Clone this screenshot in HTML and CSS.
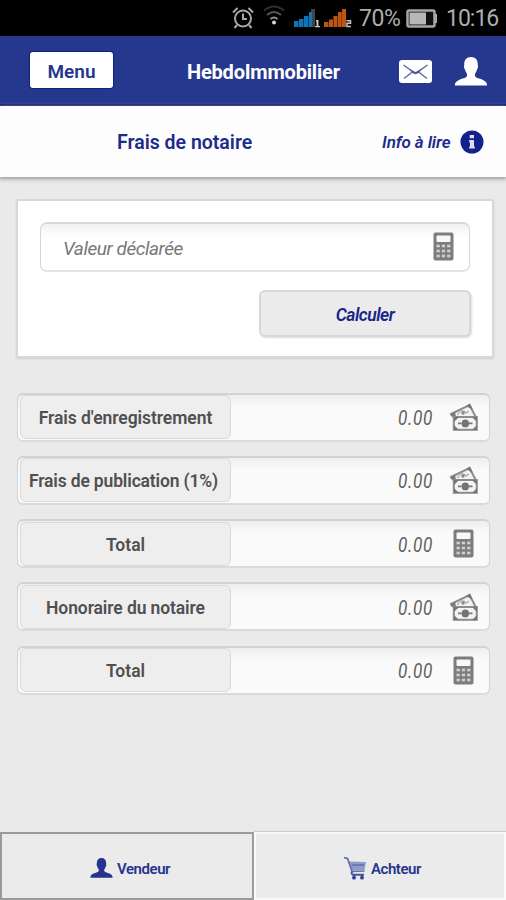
FILE: index.html
```html
<!DOCTYPE html>
<html lang="fr">
<head>
<meta charset="utf-8">
<title>HebdoImmobilier</title>
<link rel="stylesheet" href="styles.css">
</head>
<body>
<svg width="0" height="0" class="defs">
  <symbol id="person" viewBox="0 0 34 30"><path d="M17 0c4.600 0 7 3 7 7.500c0 1.500.3 1.800.2 3.200c-.2 1.600-1 1.800-1.300 3.300c-.4 2-1.900 3-1.900 4.500c0 2 1.500 2.700 4.500 3.700c5 1.700 8.200 3.200 8.200 7.300H.3c0-4.100 3.200-5.600 8.200-7.300c3-1 4.500-1.700 4.500-3.700c0-1.500-1.500-2.500-1.900-4.500c-.3-1.500-1.100-1.700-1.300-3.300c-.1-1.400.2-1.700.2-3.200C10 3 12.400 0 17 0z" fill="currentColor"/></symbol>
  <symbol id="calc" viewBox="0 0 21 29">
    <rect x=".5" y=".5" width="20" height="28" rx="2" fill="#7d7d7d"/>
    <rect x="3.500" y="3.500" width="14" height="6.500" rx="1" fill="#f8f8f8"/>
    <g fill="#d0d0d0"><rect x="3.500" y="12.700" width="3.300" height="2.600"/><rect x="8.800" y="12.700" width="3.300" height="2.600"/><rect x="14.100" y="12.700" width="3.300" height="2.600"/><rect x="3.500" y="17.700" width="3.300" height="2.600"/><rect x="8.800" y="17.700" width="3.300" height="2.600"/><rect x="14.100" y="17.700" width="3.300" height="2.600"/><rect x="3.500" y="22.700" width="3.300" height="2.600"/><rect x="8.800" y="22.700" width="3.300" height="2.600"/><rect x="14.100" y="22.700" width="3.300" height="2.600"/></g>
  </symbol>
  <symbol id="cash" viewBox="0 0 29 28">
    <path d="M4 14L2 11L20.500 2L26.500 13.500" fill="#f2f2f2" stroke="#8c8c8c" stroke-width="2"/>
    <path d="M1 12l5-3 1 5zM17 3l4-2.500 3 6.500z" fill="#777"/>
    <path d="M8.500 12q1-3 4-4q3-.5 4.500 2l3-2" fill="none" stroke="#aaa" stroke-width="1.300"/>
    <circle cx="14" cy="10" r="1.700" fill="#888"/>
    <rect x="4.800" y="14" width="23" height="12.800" fill="#f4f4f4" stroke="#8c8c8c" stroke-width="2"/>
    <path d="M5 14h5l-5 5zM28 14h-5l5 5zM5 27h5l-5-5zM28 27h-5l5-5z" fill="#777"/>
    <ellipse cx="16.300" cy="20.400" rx="3.700" ry="3.900" fill="#737373"/><path d="M9 20.400h3.500m7.500 0h3.500" stroke="#777" stroke-width="1.700"/>
  </symbol>
</svg>
<div class="screen">
  <div class="status">
    <svg class="alarm" viewBox="0 0 22 22" width="22" height="22" fill="none" stroke="#a9a9a9" stroke-width="2"><circle cx="11" cy="11.500" r="8"/><path d="M11 6.500v5.500h4M1 5.500L5.500 1M21 5.500L16.500 1M5 18l-2.500 3M17 18l2.500 3"/></svg>
    <svg class="wifi" viewBox="0 0 22 21" width="22" height="21" fill="none" stroke-width="2"><path d="M1 5.500q10-8 20 0" stroke="#303030"/><path d="M4 10q7-6 14 0" stroke="#555"/><path d="M7.500 14q3.500-3 7 0" stroke="#929292"/><circle cx="11" cy="17.500" r="1.900" fill="#ddd"/></svg>
    <svg class="sig" viewBox="0 0 26 20" width="26" height="20"><path d="M17 1h4v18h-4z" fill="#444"/><path d="M0 13h4.500v6H0zM5 11h4.500v8H5zM10 8h4.500v11H10zM15 4h3v15h-3z" fill="#0c76b6"/><path d="M22 12h2.500v6H26v1.300h-5V18h1.500v-4.500H22z" fill="#c8c8c8"/></svg>
    <svg class="sig2" viewBox="0 0 28 20" width="28" height="20"><path d="M0 14h4.500v5H0zM5 11.500h4V19H5zM9.500 8h4v11h-4zM14 4h3.700v15H14zM18 1h4v18h-4z" fill="#bd5410"/><path d="M22.500 12.700h4v2.500h-3.500v3.300h4" fill="none" stroke="#c8c8c8" stroke-width="1.500"/></svg>
    <span class="pct">70%</span>
    <svg class="batt" viewBox="0 0 32 19" width="32" height="19"><rect x="1.500" y="1.500" width="27" height="16" rx="1.500" fill="#111" stroke="#a6a6a6" stroke-width="2.500"/><rect x="3.500" y="3.500" width="16.500" height="12" fill="#b8b8b8"/><path d="M29 5h2v9h-2z" fill="#a6a6a6"/></svg>
    <span class="clock">10:16</span>
  </div>
  <header class="bar">
    <button class="menu"><span>Menu</span></button>
    <h1>HebdoImmobilier</h1>
    <svg class="mail" viewBox="0 0 33 23" width="33" height="23"><rect width="33" height="23" rx="3" fill="#fff"/><path d="M4.500 5l12 8.500L28.500 5M5 18.500l9-7M28 18.500l-9-7" fill="none" stroke="#656c9e" stroke-width="1.500"/><path d="M10 9l6.500 3 6.500-3-4 4.500h-5z" fill="#4a559b"/></svg>
    <svg class="user" width="34" height="29"><use href="#person"/></svg>
  </header>
  <div class="sub">
    <h2>Frais de notaire</h2>
    <span class="info">Info à lire</span>
    <svg class="i" viewBox="0 0 24 24" width="24" height="24"><circle cx="12" cy="12" r="11.500" fill="#12218b"/><path d="M9.700 5h4.300v3.300H9.700zM9.200 10H14v6.500h.8V18.500H9.200v-2h.8v-4h-.8z" fill="#dde"/></svg>
  </div>
  <main>
    <section class="card">
      <div class="input"><span class="ph">Valeur déclarée</span><svg width="21" height="29"><use href="#calc"/></svg></div>
      <button class="go"><span>Calculer</span></button>
    </section>
    <section class="rows">
      <div class="row"><div class="label"><span class="t1">Frais d'enregistrement</span></div><span class="val">0.00</span><svg class="ic" width="29" height="28"><use href="#cash"/></svg></div>
      <div class="row"><div class="label"><span class="t2">Frais de publication (1%)</span></div><span class="val">0.00</span><svg class="ic" width="29" height="28"><use href="#cash"/></svg></div>
      <div class="row"><div class="label"><span>Total</span></div><span class="val">0.00</span><svg class="ic" width="29" height="29"><use href="#calc"/></svg></div>
      <div class="row"><div class="label"><span class="t3">Honoraire du notaire</span></div><span class="val">0.00</span><svg class="ic" width="29" height="28"><use href="#cash"/></svg></div>
      <div class="row"><div class="label"><span>Total</span></div><span class="val">0.00</span><svg class="ic" width="29" height="29"><use href="#calc"/></svg></div>
    </section>
  </main>
  <nav>
    <div class="tab on"><svg width="23" height="20"><use href="#person"/></svg><span>Vendeur</span></div>
    <div class="tab off"><svg viewBox="0 0 23 24" width="23" height="24"><path d="M4.500 5.500L22 6l-1.500 8L8 14.500z" fill="#919bcb"/><path d="M0 1.500l3.500 1L8 15.500 20.500 15M8 9h12" fill="none" stroke="#626eae" stroke-width="1.700"/><path d="M8 15.500q-1 3 1 3.200h11M10 19v3M18 19v3" fill="none" stroke="#4652a2" stroke-width="2"/><circle cx="10" cy="21.700" r="1.900" fill="#303d96"/><circle cx="18" cy="21.700" r="1.900" fill="#303d96"/></svg><span>Achteur</span></div>
  </nav>
</div>
</body>
</html>
```

FILE: styles.css
```css
* { box-sizing: border-box; }
body { margin: 0; font-family: Roboto, "Liberation Sans", sans-serif; background: #eaeaea; }
.defs { display: block; height: 0; }
button { font: inherit; padding: 0; }
h1, h2 { margin: 0; }
svg { flex: none; display: block; }
span { white-space: nowrap; }
.screen { width: 506px; height: 900px; display: flex; flex-direction: column; overflow: hidden; }
.status { height: 36px; flex: none; background: #000; color: #adadad; display: flex; align-items: flex-start; padding-left: 232px; font-size: 23px; line-height: 36px; }
.alarm { margin-top: 7px; }
.wifi { margin: 5px 0 0 9px; }
.sig { margin: 8px 0 0 9px; }
.sig2 { margin: 8px 0 0 4px; }
.pct { margin-left: 7px; width: 42px; margin-top: 1px; letter-spacing: -0.4px; }
.batt { margin: 9px 0 0 5px; }
.clock { margin: 1px 0 0 8px; letter-spacing: -1px; }
.bar { height: 70px; flex: none; background: #26378e; border-bottom: 2px solid #030b80; display: flex; align-items: center; padding-left: 30px; color: #fff; }
.menu { width: 83px; height: 36px; background: #fff; border: 0; border-radius: 3px; box-shadow: 0 0 0 1px #101e88; color: #26348d; font-size: 19px; font-weight: 600; }
.menu span { position: relative; top: 1px; }
h1 { width: 154px; margin: 4px 0 0 74px; font-size: 20px; font-weight: 700; letter-spacing: -0.2px; white-space: nowrap; }
.mail { margin-left: 58px; margin-top: 2px; }
.user { margin-left: 22px; margin-top: 2px; }
.sub { height: 71px; flex: none; background: #fdfdfd; box-shadow: 0 1px 4px 1px #999; display: flex; align-items: center; padding-left: 117px; color: #1d2b8c; position: relative; }
h2 { width: 137px; margin-top: 2px; font-size: 19.500px; font-weight: 600; white-space: nowrap; }
.info { width: 69px; margin-left: 128px; font-size: 17px; font-weight: 600; font-style: italic; letter-spacing: -0.1px; }
.i { margin-left: 9px; }
main { flex: 1; padding: 22px 13px 0 16px; }
.card { width: 478px; height: 159px; background: #fff; border: 2px solid #d8d8d8; border-radius: 3px; box-shadow: 0 1px 2px #ccc; padding: 21px 22px 0; display: flex; flex-direction: column; }
.input { width: 430px; height: 50px; border: 1px solid #d6d6d6; border-top: 2px solid #d8d8d8; border-bottom: 2px solid #e4e4e4; border-radius: 7px; background: linear-gradient(#f2f2f2, #fff 14px); display: flex; align-items: center; justify-content: space-between; padding: 0 15px 1px 22px; }
.ph { color: #777; font-size: 19px; font-style: italic; margin-top: 3px; letter-spacing: -0.45px; }
.go { width: 212px; height: 47px; margin: 18px 0 0 219px; border: 2px solid #d8d8d8; border-radius: 6px; box-shadow: 1px 1px 2px #ddd; background: #ebebeb; color: #17248a; font-size: 17.500px; font-weight: 600; font-style: italic; letter-spacing: -0.5px; }
.go span { position: relative; top: 1px; }
.rows { display: grid; gap: 14.300px; margin: 34.500px 0 0 1px; }
.row { height: 49px; width: 473px; border: 1px solid #d2d2d2; border-top: 2px solid #d2d2d2; border-bottom: 2px solid #dadada; border-radius: 6px; background: linear-gradient(#eee, #fafafa 12px); display: flex; align-items: center; padding-left: 2px; }
.label { width: 211px; height: 44px; border: 1px solid #dadada; border-radius: 6px; background: #eee; display: flex; justify-content: center; align-items: center; padding-top: 2px; color: #505050; font-size: 17.500px; font-weight: 600; }
.t1 { letter-spacing: -0.06px; }
.t2 { letter-spacing: -0.15px; position: relative; left: -2px; }
.t3 { letter-spacing: -0.1px; }
.val { width: 36px; margin: 3px 0 0 167px; font-size: 19.500px; letter-spacing: 0.7px; transform: scaleX(0.88); transform-origin: 0 50%; font-style: italic; color: #606060; }
.ic { margin-left: 15px; }
nav { height: 68px; display: grid; grid-template-columns: 254px 252px; flex: none; color: #26348d; font-size: 15px; font-weight: 600; letter-spacing: -0.45px; }
.tab { display: flex; align-items: center; background: #ebebeb; padding-top: 3px; }
.tab span { margin-top: 2px; }
.on { border: 2px solid #9a9a9a; padding-left: 88px; gap: 4px; }
.off { border: 2px solid #fafafa; border-top: 2px solid #f8f8f8; box-shadow: 0 -1px 1px #ccc; padding-left: 88px; gap: 4px; }
```
